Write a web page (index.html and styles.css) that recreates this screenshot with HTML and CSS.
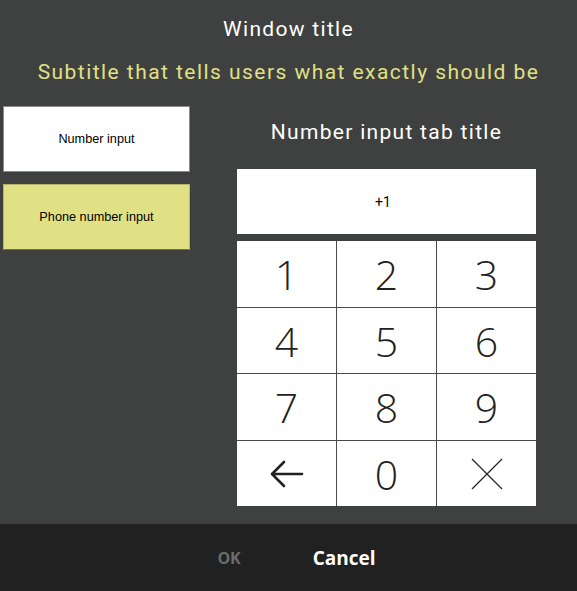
FILE: index.html
```html
<!DOCTYPE html>
<html>
<head>
<meta charset="utf-8">
<link rel="stylesheet" href="styles.css">
</head>
<body>
<div class="window">
  <div class="main">
    <h1 class="title">Window title</h1>
    <p class="subtitle">Subtitle that tells users what exactly should be</p>
    <div class="content">
      <div class="tabs">
        <button class="tab tab-active">Number input</button>
        <button class="tab tab-phone">Phone number input</button>
      </div>
      <div class="panel">
        <h2 class="panel-title">Number input tab title</h2>
        <div class="display">+1</div>
        <div class="keypad">
          <div class="key">1</div>
          <div class="key">2</div>
          <div class="key">3</div>
          <div class="key">4</div>
          <div class="key">5</div>
          <div class="key">6</div>
          <div class="key">7</div>
          <div class="key">8</div>
          <div class="key">9</div>
          <div class="key"><svg width="36" height="30" viewBox="0 0 36 30"><path d="M33 15H4M15 3L3 15l12 12" fill="none" stroke="#222" stroke-width="2.6" stroke-linecap="round" stroke-linejoin="round"/></svg></div>
          <div class="key">0</div>
          <div class="key"><svg width="32" height="32" viewBox="0 0 32 32"><path d="M1 1L31 31M31 1L1 31" fill="none" stroke="#222" stroke-width="1.2"/></svg></div>
        </div>
      </div>
    </div>
  </div>
  <div class="footer">
    <span class="btn btn-ok">OK</span>
    <span class="btn btn-cancel">Cancel</span>
  </div>
</div>
</body>
</html>
```
FILE: styles.css
```css
html, body {
  margin: 0;
  padding: 0;
  background: #3f4140;
}
.window {
  width: 577px;
  height: 591px;
  display: flex;
  flex-direction: column;
  font-family: "Roboto", "DejaVu Sans", sans-serif;
}
.main {
  flex: 1;
  display: flex;
  flex-direction: column;
}
.title {
  margin: 15px 0 0;
  font-size: 21px;
  font-weight: 400;
  line-height: 28px;
  letter-spacing: 1.3px;
  color: #ffffff;
  text-align: center;
}
.subtitle {
  margin: 15px 0 0;
  font-size: 21px;
  line-height: 28px;
  letter-spacing: 1.45px;
  color: #e0e085;
  text-align: center;
  white-space: nowrap;
}
.content {
  display: flex;
  margin-top: 20px;
}
.tabs {
  display: flex;
  flex-direction: column;
  gap: 12px;
  margin-left: 3px;
  width: 187px;
}
.tab {
  height: 66px;
  font-family: "Liberation Sans", Arial, sans-serif;
  font-size: 12.7px;
  color: #000;
  border: 1px solid #8a8a8a;
  padding: 0;
  cursor: pointer;
}
.tab-active {
  background: #ffffff;
}
.tab-phone {
  background: #e0e185;
  border-color: #b3b46a;
  border-bottom-color: #6e6f45;
}
.panel {
  margin-left: 47px;
  width: 299px;
  display: flex;
  flex-direction: column;
}
.panel-title {
  margin: 12px 0 0;
  font-size: 21px;
  font-weight: 400;
  line-height: 28px;
  letter-spacing: 1.3px;
  color: #fff;
  text-align: center;
}
.display {
  margin-top: 23px;
  height: 65px;
  background: #fff;
  display: flex;
  align-items: center;
  justify-content: center;
  font-size: 14px;
  color: #000;
  padding-right: 7px;
}
.keypad {
  margin-top: 7px;
  display: grid;
  grid-template-columns: 99px 99px 99px;
  grid-template-rows: 66px 65px 66px 65px;
  gap: 1px;
  background: #4a4a4a;
  width: 299px;
}
.key {
  background: #fff;
  display: flex;
  align-items: center;
  justify-content: center;
  font-family: "Open Sans", "Noto Sans", sans-serif;
  font-weight: 300;
  font-size: 41px;
  color: #222;
}
.footer {
  height: 67px;
  background: #212121;
  display: flex;
  align-items: center;
  justify-content: center;
  gap: 72px;
  font-family: "Open Sans", "Noto Sans", sans-serif;
  font-weight: 700;
}
.btn-ok {
  color: #6b6b6b;
  font-size: 16px;
  margin-left: 16px;
}
.btn-cancel {
  color: #ffffff;
  font-size: 19px;
}
```
